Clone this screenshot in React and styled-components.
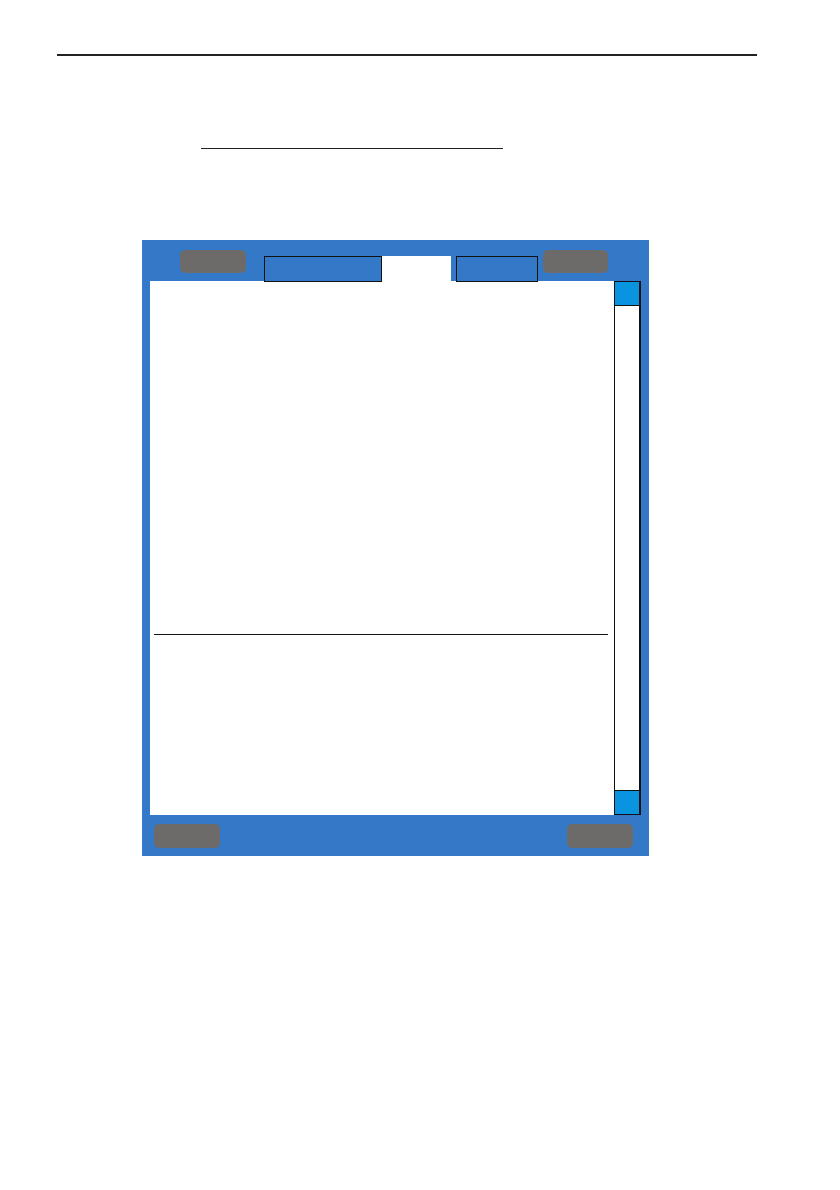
import React from "react";
import styled, { createGlobalStyle } from "styled-components";

const Global = createGlobalStyle`
  html, body { margin:0; padding:0; background:#fff; font-family:"Liberation Sans", Arial, sans-serif; }
`;

const Page = styled.div`
  width:840px;
  height:1190px;
  padding-top:54px;
  box-sizing:border-box;
`;

const Rule = styled.hr`
  margin:${p => p.top || 0}px 0 0 ${p => p.left}px;
  width:${p => p.width}px;
  border:none;
  border-top:${p => p.thick}px solid #222;
  height:0;
`;

const Panel = styled.div`
  margin:${p => p.top}px 0 0 142px;
  width:507px;
  height:616px;
  background:#3479c7;
  display:flex;
  flex-direction:column;
`;

const TopBar = styled.div`
  height:41px;
  display:flex;
  align-items:flex-end;
  padding-left:38px;
`;

const GrayButton = styled.div`
  width:${p => p.w}px;
  height:${p => p.h}px;
  background:#6d6a6a;
  border-radius:5px;
  flex-shrink:0;
`;

const TopButton = styled(GrayButton)`
  align-self:flex-start;
  margin-top:10px;
  margin-left:${p => p.ml || 0}px;
`;

const Tab = styled.div`
  box-sizing:border-box;
  width:${p => p.w}px;
  height:26px;
  margin-left:${p => p.ml || 0}px;
  margin-bottom:-1px;
  position:relative;
  z-index:1;
  background:${p => (p.active ? "#fff" : "#3479c7")};
  border:${p => (p.active ? "none" : "1px solid #111")};
`;

const Body = styled.div`
  display:flex;
  padding:0 8px;
  height:534px;
`;

const Content = styled.div`
  flex:1;
  background:#fff;
  padding:353px 6px 0 4px;
  box-sizing:border-box;
`;

const Divider = styled.div`
  border-top:1px solid #111;
`;

const ScrollBar = styled.div`
  width:27px;
  box-sizing:border-box;
  background:#fff;
  border-left:1px solid #111;
  border-right:2px solid #111;
  display:flex;
  flex-direction:column;
  justify-content:space-between;
`;

const ScrollButton = styled.div`
  height:25px;
  box-sizing:border-box;
  background:#0894df;
  border:1px solid #111;
  border-left:none;
  border-right:none;
`;

const BottomBar = styled.div`
  flex:1;
  display:flex;
  align-items:flex-start;
  justify-content:space-between;
  padding:9px 16px 0 12px;
`;

export default function App() {
  return (
    <Page>
      <Global />
      <Rule left={57} width={700} thick={2} />
      <Rule top={92} left={201} width={302} thick={1.5} />
      <Panel top={91}>
        <TopBar>
          <TopButton w={66} h={23} />
          <Tab w={118} ml={18} />
          <Tab w={69} active />
          <Tab w={82} ml={5} />
          <TopButton w={65} h={23} ml={5} />
        </TopBar>
        <Body>
          <Content>
            <Divider />
          </Content>
          <ScrollBar>
            <ScrollButton />
            <ScrollButton />
          </ScrollBar>
        </Body>
        <BottomBar>
          <GrayButton w={66} h={24} />
          <GrayButton w={66} h={24} />
        </BottomBar>
      </Panel>
    </Page>
  );
}
